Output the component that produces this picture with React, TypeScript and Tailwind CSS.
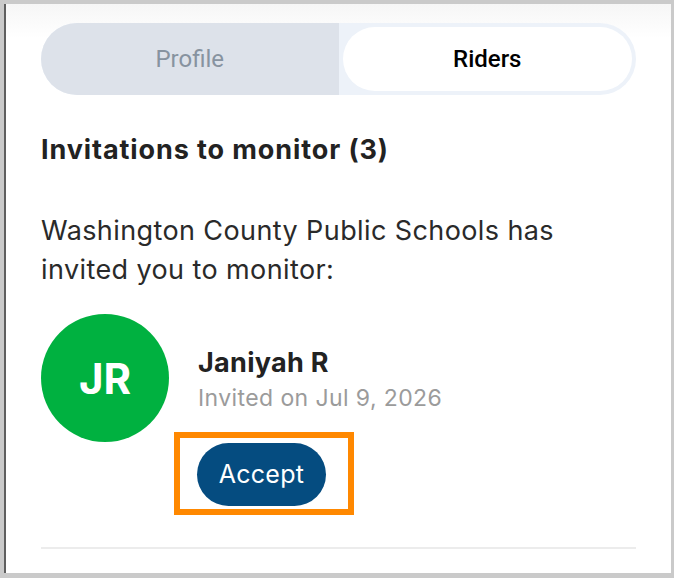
export default function App() {
  return (
    <div className="w-[674px] h-[578px] bg-[#cacaca] pt-1 pl-1 pr-[3px] pb-[5px]">
      <div className="h-full border-l-2 border-[#5f5f5f] bg-white bg-gradient-to-b from-[#f6f6f6] to-white to-[6%] pl-[35px] pr-[35px] pt-[19px] font-['Inter',sans-serif] text-[#222]">
        {/* segmented control */}
        <div className="grid h-[72px] grid-cols-2 overflow-hidden rounded-full bg-[#edf2f9] font-['Roboto',sans-serif] text-[24px]">
          <div className="flex items-center justify-center bg-[#dde2ea] text-[#8793a0]">Profile</div>
          <div className="p-1">
            <div className="flex h-full items-center justify-center rounded-full bg-white font-medium text-black">
              Riders
            </div>
          </div>
        </div>

        <h2 className="mt-[38px] text-[27px] font-bold leading-[34px] tracking-[0.9px]">
          Invitations to monitor (3)
        </h2>

        <p className="mt-[44px] max-w-[540px] text-[27px] leading-[39px] tracking-[0.4px] text-[#2a2a2a]">
          Washington County Public Schools has invited you to monitor:
        </p>

        <div className="mt-[25px] flex gap-[29px]">
          <div className="flex h-[128px] w-[128px] shrink-0 items-center justify-center rounded-full bg-[#00b140] text-[42px] font-bold text-white">
            JR
          </div>
          <div className="pt-[33px]">
            <div className="text-[27px] font-bold leading-[32px] tracking-[0.3px] text-[#222]">Janiyah R</div>
            <div className="mt-[5px] text-[23px] leading-[28px] tracking-[0.4px] text-[#9b9b9b]">Invited on Jul 9, 2026</div>
            <div className="relative mt-[31px] -ml-px w-fit">
              <button className="h-[63px] w-[129px] rounded-full bg-[#054c80] text-[25px] tracking-[0.3px] text-white">
                Accept
              </button>
              <div className="absolute -left-[23px] -top-[11px] h-[83px] w-[180px] border-[6px] border-[#ff8800]" />
            </div>
          </div>
        </div>

        <div className="mt-[41px] h-[2px] bg-[#ececec]" />
      </div>
    </div>
  );
}
